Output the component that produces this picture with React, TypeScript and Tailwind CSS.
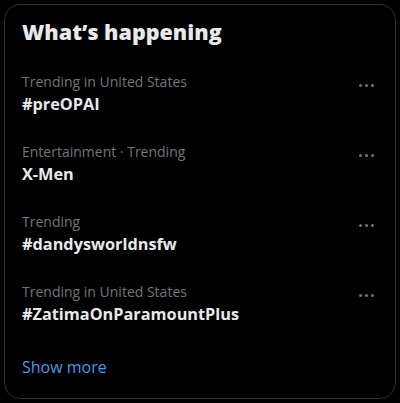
const trends = [
  { context: 'Trending in United States', name: '#preOPAI' },
  { context: 'Entertainment · Trending', name: 'X-Men' },
  { context: 'Trending', name: '#dandysworldnsfw' },
  { context: 'Trending in United States', name: '#ZatimaOnParamountPlus' },
];

function MoreDots() {
  return (
    <div className="flex items-center gap-[3px] self-start pt-[12px]">
      <span className="block h-[3px] w-[3px] rounded-full bg-[#71767b]" />
      <span className="block h-[3px] w-[3px] rounded-full bg-[#71767b]" />
      <span className="block h-[3px] w-[3px] rounded-full bg-[#71767b]" />
    </div>
  );
}

export default function App() {
  return (
    <div
      className="min-h-[403px] bg-black p-1"
      style={{ fontFamily: '"Open Sans", Arial, sans-serif' }}
    >
      <div className="flex h-[395px] flex-col rounded-2xl border border-[#2f3336]">
        <h2 className="px-[17px] pt-[13px] text-[21.5px] font-extrabold leading-7 text-[#e7e9ea]">
          What’s happening
        </h2>

        {/* trend list */}
        <div className="mt-[13px]">
          {trends.map((t, i) => (
            <div key={i} className="flex items-start justify-between py-[13px] pl-[17px] pr-[21px]">
              <div>
                <p className="text-[14px] leading-5 text-[#71767b]">{t.context}</p>
                <p className="text-[16.3px] font-bold leading-6 text-[#e7e9ea]">{t.name}</p>
              </div>
              <MoreDots />
            </div>
          ))}
        </div>

        <div className="px-[17px] pt-[16px]">
          <span className="text-[16px] leading-5 text-[#4a99e9]">Show more</span>
        </div>
      </div>
    </div>
  );
}
